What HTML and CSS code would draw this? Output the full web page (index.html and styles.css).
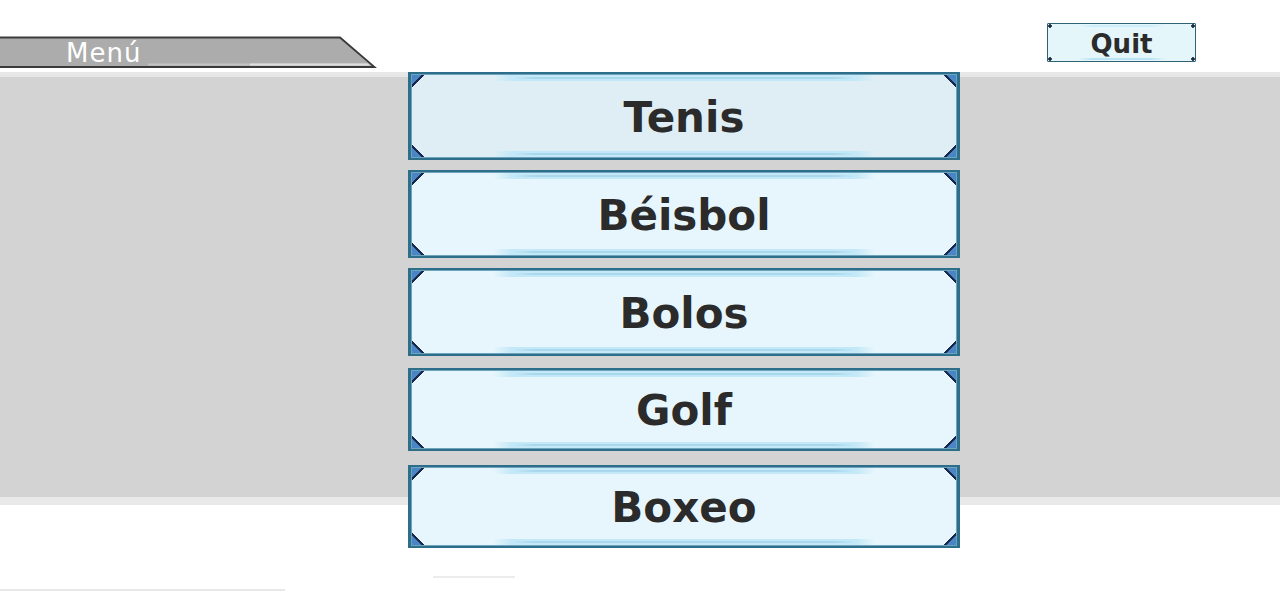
FILE: index.html
```html
<!DOCTYPE html>
<html lang="es">
<head>
<meta charset="utf-8">
<title>Menú</title>
<link rel="stylesheet" href="styles.css">
</head>
<body>
<div class="screen">
  <header class="header">
    <div class="tab">
      <svg class="tab-bg" width="377" height="33" viewBox="0 0 377 33" aria-hidden="true">
        <path d="M0 1.5 H340 L374.5 31 H0 Z" fill="#acacac"/>
        <path d="M148 27.5 H368 L370 29.5 H148 Z" fill="#c4c4c4"/>
        <path d="M250 27.5 H368 L370 29.5 H250 Z" fill="#dedede"/>
        <path d="M0 1.5 H340 L374.5 31 H0" fill="none" stroke="#3a3a3a" stroke-width="1.8"/>
      </svg>
      <span class="tab-label">Menú</span>
    </div>
    <button class="quit">Quit</button>
  </header>
  <main class="stage">
    <div class="band"></div>
    <nav class="list">
      <button class="item item-active">Tenis</button>
      <button class="item">Béisbol</button>
      <button class="item">Bolos</button>
      <button class="item item-short item-gap12">Golf</button>
      <button class="item item-short item-gap14">Boxeo</button>
    </nav>
  </main>
  <footer class="footer">
    <span class="dash dash-a"></span>
    <span class="dash dash-b"></span>
  </footer>
</div>
</body>
</html>
```

FILE: styles.css
```css
* { box-sizing: border-box; }
html, body { margin: 0; padding: 0; background: #ffffff; }
body { font-family: "DejaVu Sans", "Liberation Sans", sans-serif; }

.screen {
  width: 1280px;
  height: 593px;
  overflow: hidden;
  background: #ffffff;
}

.header {
  height: 72px;
  display: flex;
  align-items: flex-start;
}

.tab {
  position: relative;
  margin-top: 36px;
  width: 377px;
  height: 33px;
  display: flex;
  align-items: center;
  padding-left: 66px;
  padding-top: 1px;
}
.tab-bg { position: absolute; left: 0; top: 0; }
.tab-label {
  position: relative;
  color: #ffffff;
  font-family: "DejaVu Sans", sans-serif;
  font-size: 26px;
  letter-spacing: 1px;
  line-height: 1;
}

.quit {
  margin-left: auto;
  margin-right: 84px;
  margin-top: 23px;
  width: 149px;
  height: 39px;
  border: 1.5px solid #2f6274;
  border-radius: 1px;
  background:
    radial-gradient(circle, #1d2b40 0 1.5px, transparent 2px) left top / 4px 4px no-repeat,
    radial-gradient(circle, #1d2b40 0 1.5px, transparent 2px) right top / 4px 4px no-repeat,
    radial-gradient(circle, #1d2b40 0 1.5px, transparent 2px) left bottom / 4px 4px no-repeat,
    radial-gradient(circle, #1d2b40 0 1.5px, transparent 2px) right bottom / 4px 4px no-repeat,
    linear-gradient(90deg, transparent 20%, #b9e3f2 30%, #b9e3f2 70%, transparent 80%) center bottom 1px / 100% 2px no-repeat,
    linear-gradient(90deg, transparent 20%, #cdeef9 30%, #cdeef9 70%, transparent 80%) center top 1px / 100% 2px no-repeat,
    #e5f6fb;
  color: #2b2b2b;
  font-family: "DejaVu Sans", sans-serif;
  font-weight: bold;
  font-size: 26px;
  line-height: 1;
  padding: 2px 0 0 0;
  display: flex;
  align-items: center;
  justify-content: center;
}

.stage {
  display: grid;
}
.band, .list { grid-area: 1 / 1; }

.band {
  height: 433px;
  background: #d3d3d3;
  border-top: 5px solid #e7e7e7;
  border-bottom: 8px solid #e9e9e9;
}

.list {
  margin-left: 408px;
  width: 552px;
  display: flex;
  flex-direction: column;
  gap: 10px;
}

.item {
  --fill: #e7f6fc;
  height: 88px;
  width: 552px;
  border: 2.5px solid #2d6e8b;
  border-left-width: 3px;
  border-right-width: 3px;
  padding: 3px 0 0 0;
  margin: 0;
  box-shadow: inset 1px 1px 0 #6fa3bb, inset -1px -1px 0 #6fa3bb;
  background:
    linear-gradient(135deg, #4a85c5 0 8px, #18284a 8px 10.5px, transparent 10.5px) left top / 15px 15px no-repeat,
    linear-gradient(225deg, #4a85c5 0 8px, #18284a 8px 10.5px, transparent 10.5px) right top / 15px 15px no-repeat,
    linear-gradient(45deg, #4a85c5 0 8px, #18284a 8px 10.5px, transparent 10.5px) left bottom / 15px 15px no-repeat,
    linear-gradient(315deg, #4a85c5 0 8px, #18284a 8px 10.5px, transparent 10.5px) right bottom / 15px 15px no-repeat,
    linear-gradient(90deg, transparent 0, #a9d7ec 6%, #a9d7ec 94%, transparent 100%) center top 3px / 340px 2px no-repeat,
    linear-gradient(90deg, transparent 0, #c3e8f7 5%, #c3e8f7 95%, transparent 100%) center top 1px / 382px 6px no-repeat,
    linear-gradient(90deg, transparent 0, #a9d7ec 6%, #a9d7ec 94%, transparent 100%) center bottom 3px / 340px 2px no-repeat,
    linear-gradient(90deg, transparent 0, #c3e8f7 5%, #c3e8f7 95%, transparent 100%) center bottom 1px / 382px 6px no-repeat,
    var(--fill);
  color: #2b2b2b;
  font-family: "DejaVu Sans", sans-serif;
  font-weight: bold;
  font-size: 42px;
  line-height: 1;
  display: flex;
  align-items: center;
  justify-content: center;
  cursor: pointer;
}
.item-active { --fill: #dfeef5; }
.item-short { height: 83px; }
.item-gap12 { margin-top: 2px; }
.item-gap14 { margin-top: 4px; }

.footer {
  position: relative;
  height: 45px;
}
.dash { position: absolute; display: block; }
.dash-a { left: 433px; top: 28px; width: 82px; height: 2px; background: #ececec; }
.dash-b { left: 0; top: 41px; width: 285px; height: 2px; background: #e8e8e8; }
```
